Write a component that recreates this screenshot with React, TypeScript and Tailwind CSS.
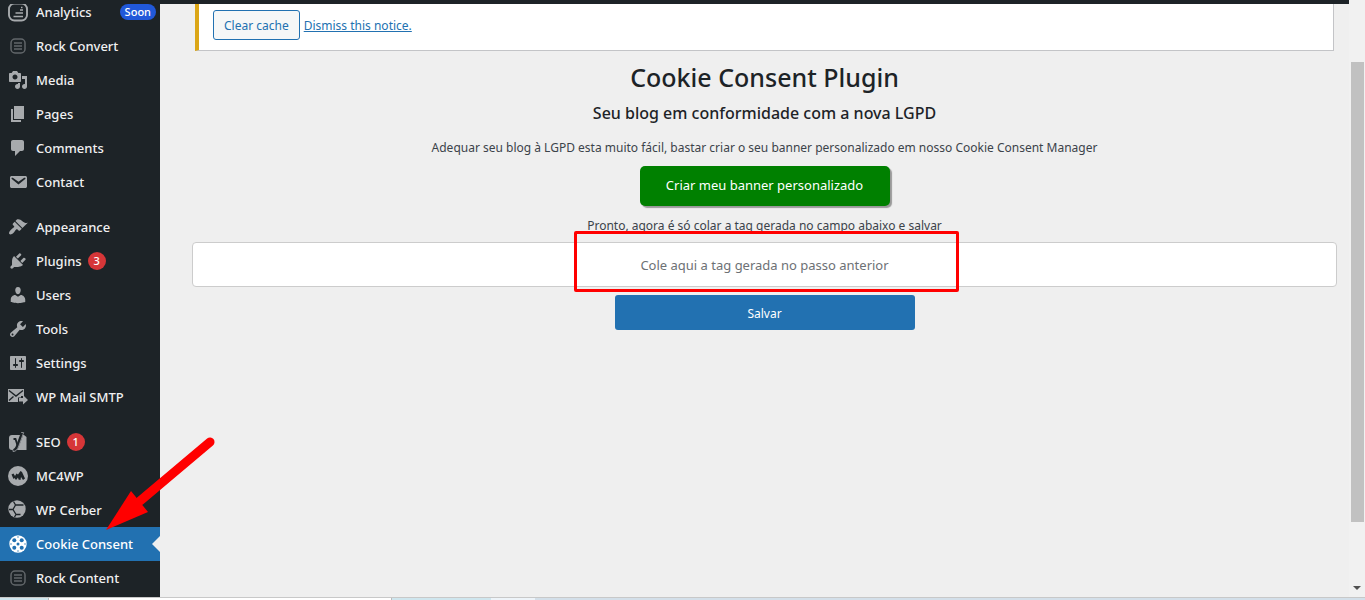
import { useState, type ReactNode } from 'react'
import clsx from 'clsx'

interface MenuEntry {
  label: string
  icon: ReactNode
  count?: number
  tag?: string
  active?: boolean
}

function Icon({ d }: { d: string }) {
  return (
    <svg viewBox="0 0 20 20" className="size-5" fill="currentColor" aria-hidden="true">
      <path fillRule="evenodd" d={d} />
    </svg>
  )
}

function AnalyticsIcon() {
  return (
    <svg viewBox="0 0 20 20" className="size-5" fill="none" stroke="currentColor" aria-hidden="true">
      <rect x="1" y="1.5" width="18" height="17" rx="5.5" strokeWidth="1.9" />
      <path d="M5.500 14.500h9.500M7.500 11h7.500M12 8h3M13 5.500h1.500" strokeWidth="1.7" />
    </svg>
  )
}

function RockIcon() {
  return (
    <svg viewBox="0 0 20 20" className="size-5 opacity-50" fill="none" stroke="currentColor" aria-hidden="true">
      <rect x="3" y="3" width="14" height="14" rx="4" strokeWidth="1.5" />
      <path d="M6 7h8M6 10h8M6 13h8" strokeWidth="1.5" />
    </svg>
  )
}

function MailSmtpIcon() {
  return (
    <svg viewBox="0 0 20 20" className="size-5" fill="currentColor" aria-hidden="true">
      <path d="M0 2h16v7h-3v1.500h-3V15H0z" />
      <path d="M1 3.500l7 5.500 7-5.500M1 13.500l4.500-4" fill="none" stroke="#1d2327" strokeWidth="1.4" />
      <path d="M11 11h4V8l5 5-5 4.500v-3h-4z" />
    </svg>
  )
}

function SeoIcon() {
  return (
    <svg viewBox="0 0 20 20" className="size-5" aria-hidden="true">
      <path d="M4 3h12l2.500 2v13H4a3 3 0 0 1-3-3V6a3 3 0 0 1 3-3z" fill="currentColor" />
      <path d="M5.500 7H7.500L9.500 13.500" fill="none" stroke="#1d2327" strokeWidth="1.800" />
      <path d="M14.500 0.500L9.700 13.500C8.500 17 7.500 18.500 5 18.700" fill="none" stroke="#1d2327" strokeWidth="3" />
      <path d="M15.500 0.500h-2.300M15.700 0.500L10.800 14C9.500 17.500 8 19.500 5 19.500v-2" fill="none" stroke="currentColor" strokeWidth="0.8" />
    </svg>
  )
}

function Mc4wpIcon() {
  return (
    <svg viewBox="0 0 20 20" className="size-5" aria-hidden="true">
      <circle cx="10" cy="10" r="10" fill="currentColor" />
      <path
        d="M3.500 8.500l2-1 1.500 2.500 1.500-2.500 1.500 1 2.500-3.500 1.500 1 3 6.500-2 1.500-2-3-.5 3-2-.5-.5-2-2 2.500-1.500-2L5.500 13z"
        fill="#1d2327"
      />
    </svg>
  )
}

function CerberIcon() {
  return (
    <svg viewBox="0 0 20 20" className="size-5" aria-hidden="true">
      <circle cx="9" cy="9" r="8.700" fill="currentColor" />
      <path d="M5.500 1.500L7.500 5 5 9.500 8 14.500 6.500 17M15.500 5H7.500M8 14.500h4.500M5 9.500H1" fill="none" stroke="#1d2327" strokeWidth="1.300" />
    </svg>
  )
}

function CookieIcon() {
  return (
    <svg viewBox="0 0 20 20" className="size-5" aria-hidden="true">
      <circle cx="10" cy="10" r="8.700" fill="#ffffff" />
      <g fill="#2271b1">
        <circle cx="10" cy="10" r="1.500" />
        <circle cx="6.300" cy="6.300" r="2" />
        <circle cx="13.700" cy="6.300" r="2" />
        <circle cx="6.300" cy="13.700" r="2" />
        <circle cx="13.700" cy="13.700" r="2" />
        <circle cx="10" cy="3" r="0.700" />
        <circle cx="10" cy="17" r="0.700" />
        <circle cx="3" cy="10" r="0.700" />
        <circle cx="17" cy="10" r="0.700" />
      </g>
    </svg>
  )
}

const menuGroups: MenuEntry[][] = [
  [
    { label: 'Analytics', icon: <AnalyticsIcon />, tag: 'Soon' },
    { label: 'Rock Convert', icon: <RockIcon /> },
    {
      label: 'Media',
      icon: (
        <Icon d="M13 11V4c0-.55-.45-1-1-1h-1.670L9 1H5L3.670 3H2c-.55 0-1 .45-1 1v7c0 .55.45 1 1 1h10c.55 0 1-.45 1-1zM7 4.500c1.380 0 2.500 1.120 2.500 2.500S8.380 9.500 7 9.500 4.500 8.380 4.500 7 5.620 4.500 7 4.500zM14 6h5v10.500c0 1.380-1.120 2.500-2.500 2.500S14 17.880 14 16.500s1.120-2.500 2.500-2.500c.17 0 .34.02.5.05V9h-3V6zm-4 8.050V13h2v3.500c0 1.380-1.120 2.500-2.500 2.500S7 17.880 7 16.500 8.120 14 9.500 14c.17 0 .34.02.5.05z" />
      ),
    },
    { label: 'Pages', icon: <Icon d="M6 15V2h10v13H6zm-1 1h8v2H3V5h2v11z" /> },
    {
      label: 'Comments',
      icon: <Icon d="M5 2h9c1.100 0 2 .9 2 2v7c0 1.100-.9 2-2 2h-2l-5 5v-5H5c-1.100 0-2-.9-2-2V4c0-1.100.9-2 2-2z" />,
    },
    {
      label: 'Contact',
      icon: (
        <Icon d="M3.870 4h13.250C18.370 4 19 4.590 19 5.790v8.420c0 1.190-.63 1.790-1.880 1.790H3.870c-1.250 0-1.880-.6-1.880-1.790V5.790c0-1.200.63-1.790 1.880-1.790zm6.620 8.600l6.740-5.530c.24-.2.43-.66.13-1.070-.29-.41-.82-.42-1.170-.17l-5.700 3.860L4.800 5.830c-.35-.25-.88-.24-1.170.17-.3.41-.11.87.13 1.070z" />
      ),
    },
  ],
  [
    {
      label: 'Appearance',
      icon: (
        <Icon d="M14.480 11.060L7.410 3.990l1.500-1.500c.5-.56 2.300-.47 3.510.32 1.210.8 1.430 1.280 2.910 2.100 1.180.64 2.450 1.260 4.450.85zm-.71.71L6.700 4.700 4.930 6.470c-.39.39-.39 1.020 0 1.410l1.060 1.060c.39.39.39 1.030 0 1.420-.6.6-1.430 1.110-2.210 1.690-.35.26-.7.53-1.010.84C1.430 14.230.4 16.080 1.400 17.070c.99 1 2.840-.03 4.180-1.360.31-.31.58-.66.85-1.020.57-.78 1.080-1.610 1.690-2.210.39-.39 1.020-.39 1.410 0l1.060 1.060c.39.39 1.020.39 1.410 0z" />
      ),
    },
    {
      label: 'Plugins',
      count: 3,
      icon: (
        <Icon d="M13.110 4.360L9.870 7.600 8 5.730l3.240-3.240c.35-.34 1.050-.2 1.560.32.52.51.66 1.210.31 1.550zm-8 1.770l.91-1.120 9.010 9.010-1.190.84c-.71.71-2.630 1.160-3.820 1.160H6.140L4.900 17.260c-.59.59-1.540.59-2.120 0-.59-.58-.59-1.530 0-2.120l1.240-1.240v-3.880c0-1.130.4-3.190 1.090-3.890zm7.260 3.970l3.240-3.240c.34-.35 1.040-.21 1.550.31.52.51.66 1.210.31 1.550l-3.240 3.250z" />
      ),
    },
    {
      label: 'Users',
      icon: (
        <Icon d="M10 9.250c-2.270 0-2.730-3.440-2.730-3.440C7 4.020 7.820 2 9.970 2c2.160 0 2.980 2.020 2.710 3.810 0 0-.41 3.440-2.680 3.440zm0 2.570L12.720 10c2.390 0 4.520 2.330 4.520 4.530v2.490s-3.650 1.130-7.240 1.130c-3.650 0-7.240-1.130-7.240-1.130v-2.490c0-2.250 1.940-4.480 4.470-4.480z" />
      ),
    },
    {
      label: 'Tools',
      icon: (
        <Icon d="M16.680 9.770c-1.340 1.340-3.300 1.670-4.950.99l-5.410 6.520c-.99.99-2.590.99-3.580 0s-.99-2.590 0-3.570l6.520-5.420c-.68-1.650-.35-3.610.99-4.950 1.280-1.280 3.120-1.620 4.720-1.060l-2.890 2.890 2.820 2.820 2.860-2.870c.53 1.580.18 3.390-1.080 4.650zM3.810 16.210c.4.39 1.040.39 1.430 0 .4-.4.4-1.040 0-1.430-.39-.4-1.030-.4-1.430 0-.39.39-.39 1.030 0 1.430z" />
      ),
    },
    {
      label: 'Settings',
      icon: (
        <Icon d="M18 16V4c0-.55-.45-1-1-1H3c-.55 0-1 .45-1 1v12c0 .55.45 1 1 1h14c.55 0 1-.45 1-1zM8 11h1c.55 0 1 .45 1 1s-.45 1-1 1H8v1.500c0 .28-.22.5-.5.5s-.5-.22-.5-.5V13H6c-.55 0-1-.45-1-1s.45-1 1-1h1V5.500c0-.28.22-.5.5-.5s.5.22.5.5V11zm5-2h-1c-.55 0-1-.45-1-1s.45-1 1-1h1V5.500c0-.28.22-.5.5-.5s.5.22.5.5V7h1c.55 0 1 .45 1 1s-.45 1-1 1h-1v5.500c0 .28-.22.5-.5.5s-.5-.22-.5-.5V9z" />
      ),
    },
    { label: 'WP Mail SMTP', icon: <MailSmtpIcon /> },
  ],
  [
    { label: 'SEO', icon: <SeoIcon />, count: 1 },
    { label: 'MC4WP', icon: <Mc4wpIcon /> },
    { label: 'WP Cerber', icon: <CerberIcon /> },
    { label: 'Cookie Consent', icon: <CookieIcon />, active: true },
    { label: 'Rock Content', icon: <RockIcon /> },
  ],
]

function MenuItem({ label, icon, count, tag, active }: MenuEntry) {
  return (
    <li>
      <a
        href="#"
        aria-current={active ? 'page' : undefined}
        className={clsx(
          'relative flex h-[34px] items-center gap-2 pl-2 text-[13px] font-medium',
          active ? 'bg-[#2271b1] text-white' : 'text-[#f0f0f1]'
        )}
      >
        <span className={active ? 'text-white' : 'text-[#a7aaad]'}>{icon}</span>
        <span className="leading-4 whitespace-nowrap">{label}</span>
        {count && (
          <span className="-ml-0.5 flex size-[18px] items-center justify-center rounded-full bg-[#d63638] text-[11px] text-white">
            {count}
          </span>
        )}
        {tag && (
          <span className="mr-1 ml-auto flex h-4 items-center rounded-full bg-[#2158d9] px-[5px] text-[11px] leading-4 text-white">
            {tag}
          </span>
        )}
        {active && (
          <span className="absolute top-1/2 right-0 -translate-y-1/2 border-y-8 border-r-8 border-transparent border-r-[#efefef]" />
        )}
      </a>
    </li>
  )
}

function Sidebar() {
  return (
    <nav className="w-40 shrink-0 overflow-hidden bg-[#1d2327]">
      <div className="-mt-[9px] flex flex-col gap-[11px]">
        {menuGroups.map((group, i) => (
          <ul key={i}>
            {group.map((item) => (
              <MenuItem key={item.label} {...item} />
            ))}
          </ul>
        ))}
      </div>
    </nav>
  )
}

function Notice() {
  return (
    <div className="mr-[15px] ml-[35px] flex h-[47px] gap-1 border-r border-b border-l-4 border-[#c3c4c7] border-l-[#dba617] bg-white pt-[6px] pl-[14px] text-[12px] text-[#2271b1]">
      <button className="h-[30px] rounded-[3px] border border-[#2271b1] bg-[#f6f7f7] px-[10px] pt-0.5">Clear cache</button>
      <a href="#" className="leading-8 underline">
        Dismiss this notice.
      </a>
    </div>
  )
}

function ConsentForm() {
  const [code, setCode] = useState('')

  return (
    <form
      className="mr-3 ml-8 flex flex-col items-center text-center text-[12px] text-[#3c434a]"
      onSubmit={(e) => e.preventDefault()}
    >
      <h1 className="mt-[10px] text-[25px] leading-8 font-medium text-[#1d2327]">Cookie Consent Plugin</h1>
      <h2 className="mt-2 text-[16px] leading-6 font-medium text-[#1d2327]">Seu blog em conformidade com a nova LGPD</h2>
      <p className="mt-[13px] leading-5">
        Adequar seu blog à LGPD esta muito fácil, bastar criar o seu banner personalizado em nosso Cookie Consent Manager
      </p>
      <button
        type="button"
        className="mt-2 h-10 w-[250px] rounded-[5px] bg-[green] text-[13px] text-white shadow-[2px_2px_1px_#999]"
      >
        Criar meu banner personalizado
      </button>
      <label htmlFor="tag" className="mt-2 leading-6">
        Pronto, agora é só colar a tag gerada no campo abaixo e salvar
      </label>
      <div className="relative mt-1 w-full">
        <input
          id="tag"
          type="text"
          value={code}
          onChange={(e) => setCode(e.target.value)}
          placeholder="Cole aqui a tag gerada no passo anterior"
          className="h-[45px] w-full rounded border border-[#ccc] bg-white text-center text-[13px] placeholder:text-[#6d7175]"
        />
        <div className="pointer-events-none absolute inset-x-0 -top-[11px] flex justify-center pl-[3px]">
          <div className="h-[61px] w-[385px] rounded-xs border-3 border-[#ff0000]" />
        </div>
      </div>
      <button className="mt-2 h-[35px] w-[300px] rounded-[3px] bg-[#2271b1] pt-0.5 text-white">Salvar</button>
    </form>
  )
}

function Scrollbar() {
  return (
    <div className="flex w-4 shrink-0 flex-col items-center justify-between bg-[#f1f1f1] pt-[62px] pb-[7px]">
      <div className="h-[460px] w-[13px] bg-[#c1c1c1]" />
      <div className="border-x-4 border-t-4 border-transparent border-t-[#505050]" />
    </div>
  )
}

export default function App() {
  return (
    <div className="relative flex h-screen flex-col overflow-hidden bg-[#efefef] font-['Noto_Sans','Open_Sans',sans-serif]">
      <div className="flex min-h-0 flex-1">
        <div className="flex min-w-0 flex-1 flex-col">
          <div className="h-1 shrink-0 bg-[#1d2327]" />
          <div className="flex min-h-0 flex-1">
            <Sidebar />
            <main className="min-w-0 flex-1">
              <Notice />
              <ConsentForm />
            </main>
          </div>
        </div>
        <Scrollbar />
      </div>
      <div className="flex h-[3px] shrink-0 border-t border-[#c8c8c8] bg-[#d3dfe9]">
        <div className="w-12 bg-[#cfe6ee]" />
        <div className="w-[344px] border-x border-[#bbb] bg-white" />
        <div className="w-[99px] bg-[#cfe6ee]" />
        <div className="w-11 bg-[#eef4f9]" />
      </div>
      <svg
        className="pointer-events-none absolute top-[436px] left-[104px] h-[96px] w-[114px]"
        viewBox="104 436 114 96"
        aria-hidden="true"
      >
        <path d="M210 442L140 501" stroke="#ff0000" strokeWidth="9" strokeLinecap="round" />
        <path d="M106 530l25-39 17 21z" fill="#ff0000" />
      </svg>
    </div>
  )
}
